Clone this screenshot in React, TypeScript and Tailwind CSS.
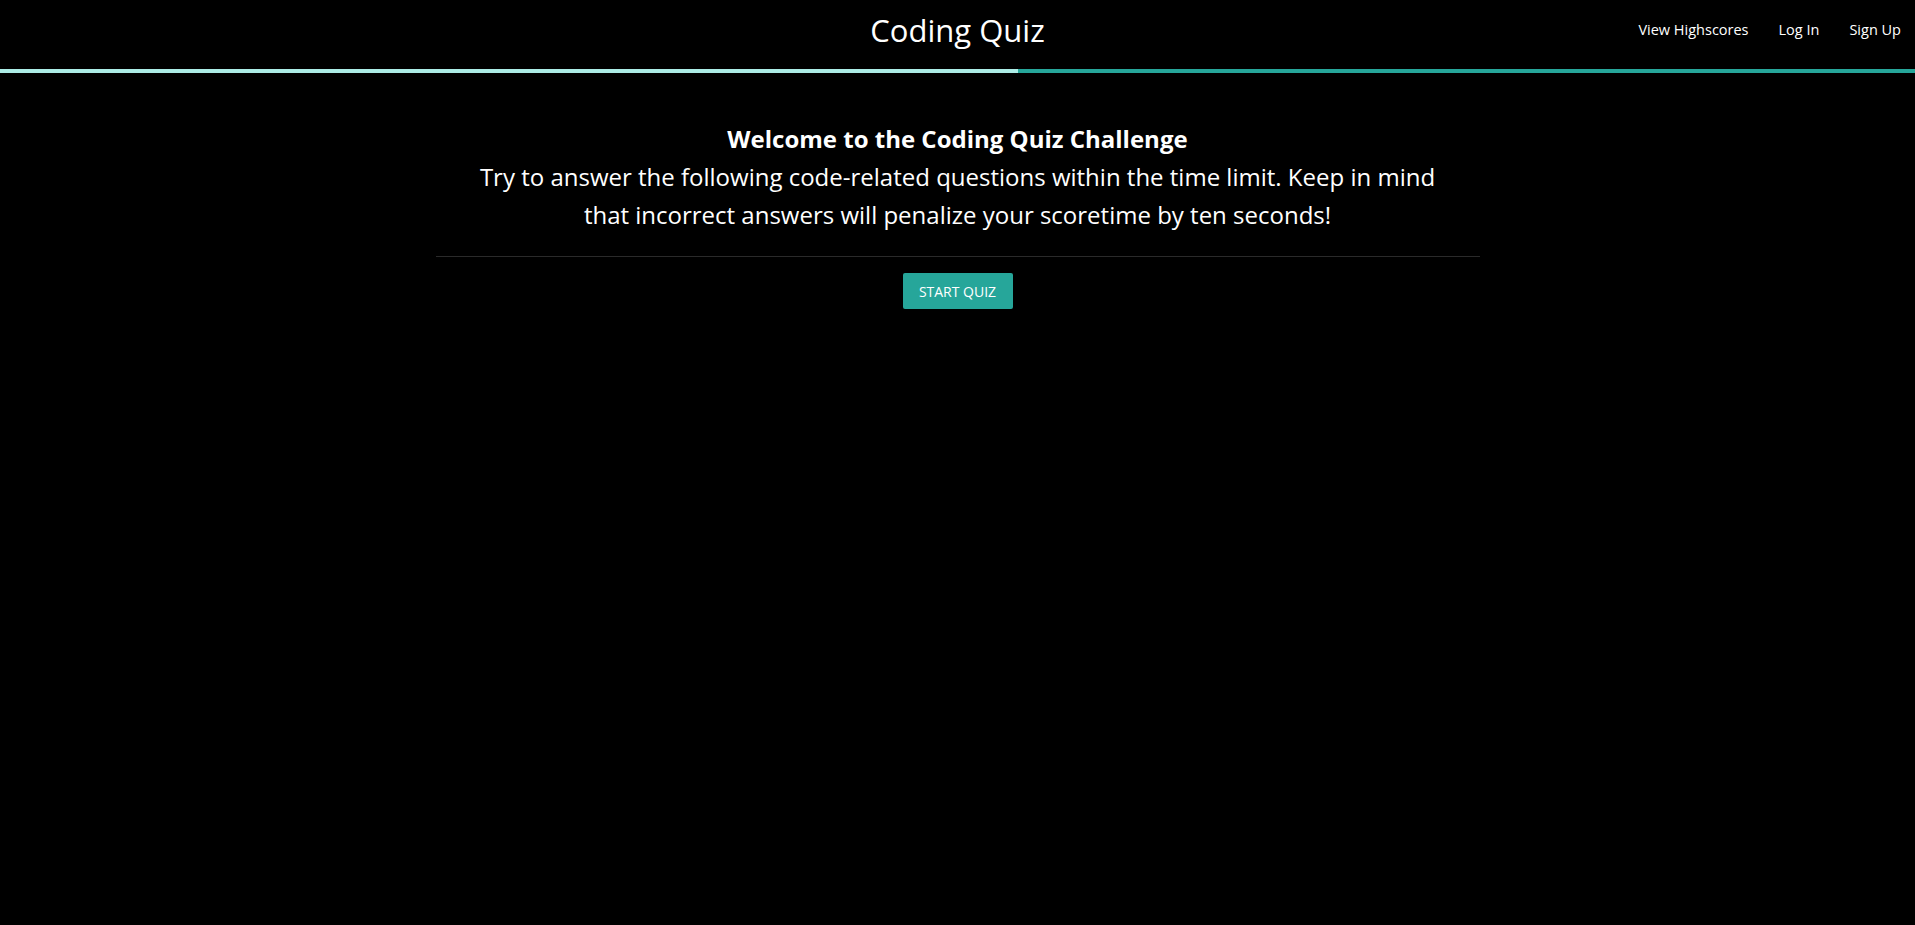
import React from "react";

export default function App() {
  return (
    <div
      className="min-h-screen w-full bg-black text-white"
      style={{ fontFamily: '"Open Sans", "Noto Sans", sans-serif' }}
    >
      <header className="relative flex h-[60px] items-center justify-center">
        <div className="text-[31px] font-normal leading-none">Coding Quiz</div>
        <nav className="absolute right-0 top-0 flex h-full items-center pr-[14px] text-[14.5px]">
          <a className="px-[15px]">View Highscores</a>
          <a className="px-[15px]">Log In</a>
          <a className="pl-[15px]">Sign Up</a>
        </nav>
      </header>
      <div className="mt-[9px] flex h-1 w-full bg-[#26a69a]">
        <div className="h-full w-[1018px] bg-[#acece6]" />
      </div>
      <main className="mx-auto flex w-[1044px] flex-col items-center">
        <div className="mt-[47px] text-center text-[24px] leading-[38px]">
          <div className="font-bold">Welcome to the Coding Quiz Challenge</div>
          <div>
            Try to answer the following code-related questions within the time limit. Keep in mind
            <br />
            that incorrect answers will penalize your scoretime by ten seconds!
          </div>
        </div>
        <div className="mt-[22px] h-px w-full bg-[#2a2a2a]" />
        <button className="mt-[16px] flex h-[36px] w-[110px] items-center justify-center rounded-[2px] bg-[#26a69a] text-[14px] text-white">
          START QUIZ
        </button>
      </main>
    </div>
  );
}
